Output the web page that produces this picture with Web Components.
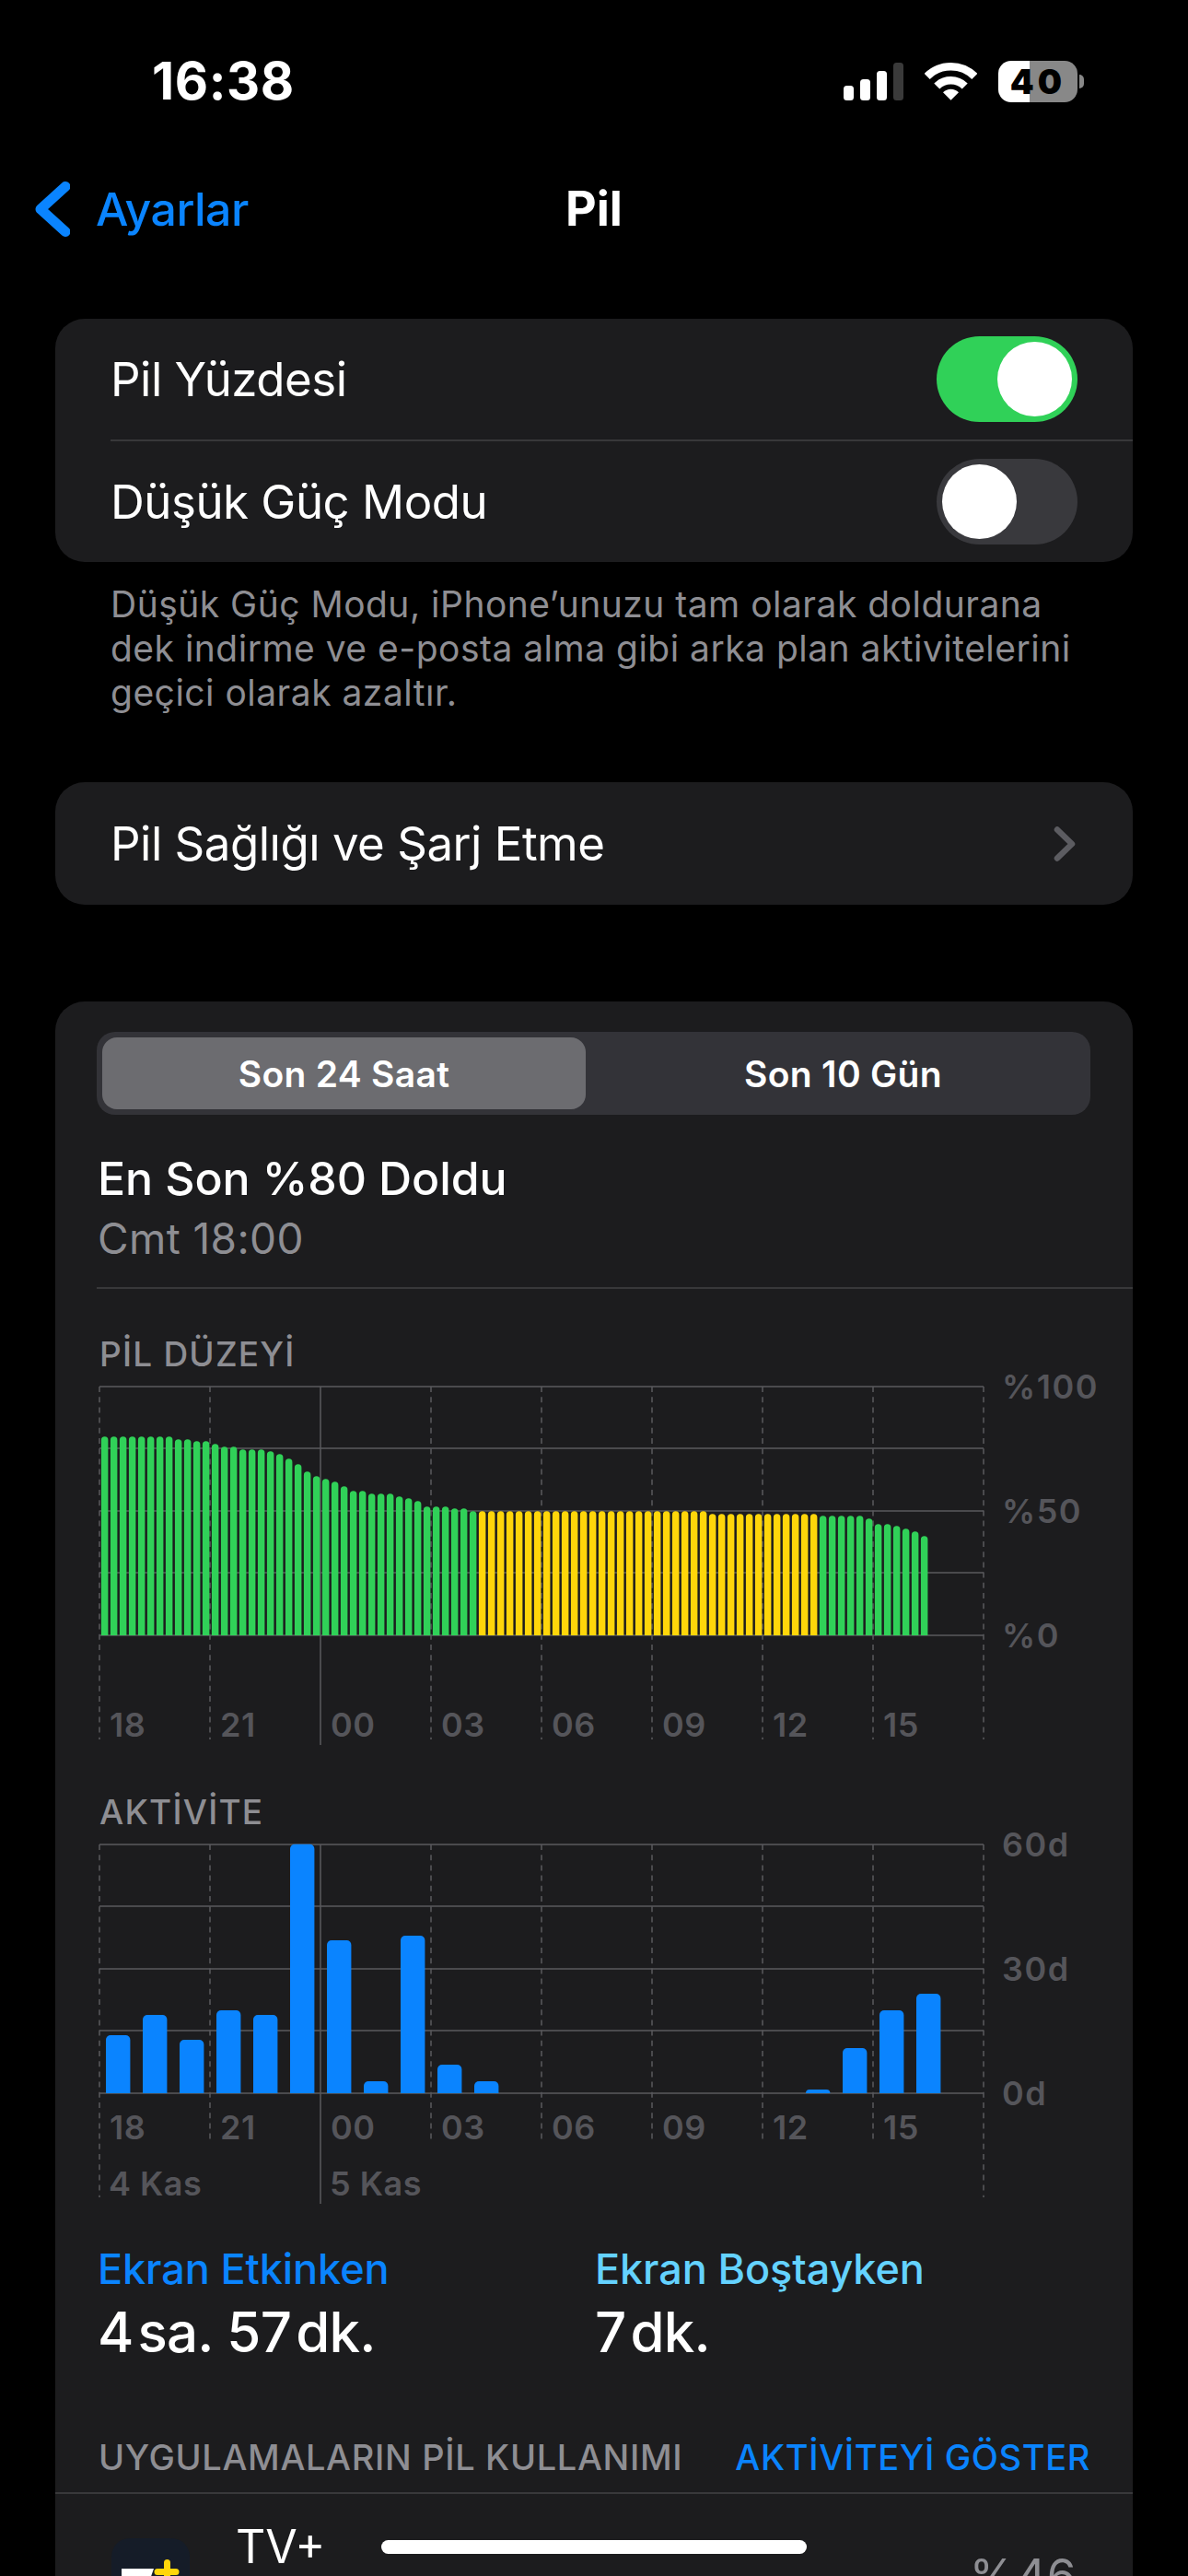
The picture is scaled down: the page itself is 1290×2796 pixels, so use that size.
<!DOCTYPE html>
<html lang="tr">
<head>
<meta charset="utf-8">
<title>Pil</title>
<style>
  html, body { margin: 0; height: 2796px; overflow: hidden; background: #000; }
  body { position: relative; color: #fff; font-family: Inter, "Liberation Sans", sans-serif; }
  settings-page { display: block; }
</style>
</head>
<body>
<settings-page>
  <status-bar slot="top" time="16:38" level="40"></status-bar>
  <nav-bar slot="top" back="Ayarlar" title="Pil"></nav-bar>

  <group-card style="margin-top:68px">
    <settings-row>Pil Yüzdesi<ios-switch slot="end" on></ios-switch></settings-row>
    <settings-row divided>Düşük Güç Modu<ios-switch slot="end"></ios-switch></settings-row>
  </group-card>
  <group-note>Düşük Güç Modu, iPhone’unuzu tam olarak doldurana<br>dek indirme ve e-posta alma gibi arka plan aktivitelerini<br>geçici olarak azaltır.</group-note>

  <group-card style="margin-top:73px">
    <settings-row link>Pil Sağlığı ve Şarj Etme</settings-row>
  </group-card>

  <group-card style="margin-top:105px">
    <segment-picker first="Son 24 Saat" second="Son 10 Gün"></segment-picker>
    <charge-summary title="En Son %80 Doldu" time="Cmt 18:00"></charge-summary>
    <usage-chart type="level" heading="PİL DÜZEYİ"></usage-chart>
    <usage-chart type="activity" heading="AKTİVİTE"></usage-chart>
    <screen-totals></screen-totals>
    <section-head action="AKTİVİTEYİ GÖSTER">UYGULAMALARIN PİL KULLANIMI</section-head>
    <app-row name="TV+" share="%46"></app-row>
  </group-card>
</settings-page>
<home-indicator></home-indicator>

<script>
/**
 * Battery settings screen, built from small web components.
 */

/**
 * Makes a template out of a html string.
 *
 * @param {string} html the markup.
 * @returns {HTMLTemplateElement} the template.
 */
function makeTemplate (html) {
  const template = document.createElement('template')
  template.innerHTML = html
  return template
}

/**
 * Base class, stamps the static template into an open shadow root.
 */
class ShadowElement extends HTMLElement {
  /**
   * Creates an instance of the current type.
   */
  constructor () {
    super()
    this.attachShadow({ mode: 'open' })
      .appendChild(this.constructor.template.content.cloneNode(true))
  }

  /**
   * Shortcut for querySelector in the shadow root.
   *
   * @param {string} selector css selector.
   * @returns {Element} the element found.
   */
  $ (selector) {
    return this.shadowRoot.querySelector(selector)
  }
}

customElements.define('settings-page', class extends ShadowElement {
  static template = makeTemplate(`
    <style>
      :host { display: block; }
      .top { display: block; }
      .body { padding: 0 60px; }
    </style>
    <div class="top"><slot name="top"></slot></div>
    <div class="body"><slot></slot></div>
  `)
})

customElements.define('status-bar', class extends ShadowElement {
  static template = makeTemplate(`
    <style>
      :host { display: flex; align-items: center; justify-content: space-between; height: 176px; padding: 0 113px 0 165px; }
      .time { font-size: 56px; font-weight: 700; letter-spacing: .6px; line-height: 60px; }
      .icons { display: flex; align-items: center; }
      .signal { display: block; margin-right: 23px; }
      .wifi { display: block; margin-right: 23px; }
      .battery { display: flex; align-items: center; gap: 2px; }
      .body {
        display: flex; align-items: center; justify-content: center;
        width: 86px; height: 45px; border-radius: 14px;
        background: linear-gradient(to right, #fff 34px, #888 34px);
        color: #000; font-size: 37px; font-weight: 900; letter-spacing: 4px; line-height: 45px;
      }
      .nub { width: 5px; height: 15px; border-radius: 0 8px 8px 0; background: #888; }
    </style>
    <div class="time"></div>
    <div class="icons">
      <svg class="signal" width="65" height="41" viewBox="0 0 65 41">
        <rect x="0" y="25" width="11" height="16" rx="3.5" fill="#fff"/>
        <rect x="18" y="18" width="11" height="23" rx="3.5" fill="#fff"/>
        <rect x="36" y="9" width="11" height="32" rx="3.5" fill="#fff"/>
        <rect x="54" y="0" width="11" height="41" rx="3.5" fill="#3a3a3a"/>
      </svg>
      <svg class="wifi" width="57" height="42" viewBox="0 0 57 42" fill="none" stroke="#fff" stroke-width="8.5">
        <path d="M2.7 15.9A36.5 36.5 0 0 1 54.3 15.9"/>
        <path d="M13.3 26.5A21.5 21.5 0 0 1 43.7 26.5"/>
        <path d="M28.5 41.7L20 33.2A12 12 0 0 1 37 33.2Z" fill="#fff" stroke="none"/>
      </svg>
      <div class="battery"><div class="body"></div><div class="nub"></div></div>
    </div>
  `)

  /**
   * Fills in the attributes.
   */
  connectedCallback () {
    this.$('.time').textContent = this.getAttribute('time')
    this.$('.body').textContent = this.getAttribute('level')
  }
})

customElements.define('nav-bar', class extends ShadowElement {
  static template = makeTemplate(`
    <style>
      :host { display: grid; grid-template-columns: 1fr auto 1fr; align-items: center; height: 102px; padding-left: 37px; padding-right: 37px; }
      .back { display: flex; align-items: center; gap: 28px; color: #0a84ff; font-size: 50px; font-weight: 500; letter-spacing: -.5px; line-height: 60px; }
      svg { display: block; }
      .title { font-size: 52px; font-weight: 700; letter-spacing: 0; line-height: 60px; }
    </style>
    <div class="back">
      <svg width="39" height="60" viewBox="0 0 39 60" fill="none" stroke="#0a84ff" stroke-width="11" stroke-linecap="round" stroke-linejoin="round"><path d="M34 5.500L7 30L34 54.500"/></svg>
      <span class="label"></span>
    </div>
    <div class="title"></div>
    <div></div>
  `)

  /**
   * Fills in the attributes.
   */
  connectedCallback () {
    this.$('.label').textContent = this.getAttribute('back')
    this.$('.title').textContent = this.getAttribute('title')
  }
})

customElements.define('group-card', class extends ShadowElement {
  static template = makeTemplate(`
    <style>
      :host { display: block; background: #1c1c1e; border-radius: 32px; overflow: hidden; }
    </style>
    <slot></slot>
  `)
})

customElements.define('settings-row', class extends ShadowElement {
  static template = makeTemplate(`
    <style>
      :host { display: block; padding-left: 60px; font-size: 51px; letter-spacing: -.5px; }
      .inner { display: flex; align-items: center; justify-content: space-between; height: 131px; padding-right: 60px; box-sizing: border-box; }
      :host([divided]) .inner { height: 133px; border-top: 2px solid #38383a; }
      :host([link]) .inner { height: 133px; }
      svg { display: none; }
      :host([link]) svg { display: block; margin-right: 2px; }
    </style>
    <div class="inner">
      <span><slot></slot></span>
      <slot name="end"></slot>
      <svg width="24" height="38" viewBox="0 0 24 38" fill="none" stroke="#5c5c61" stroke-width="6.500" stroke-linecap="round" stroke-linejoin="round"><path d="M4 3.500L20 19L4 34.500"/></svg>
    </div>
  `)
})

customElements.define('ios-switch', class extends ShadowElement {
  static template = makeTemplate(`
    <style>
      :host { display: flex; width: 153px; height: 93px; padding: 6px; box-sizing: border-box; border-radius: 47px; background: #39393d; }
      :host([on]) { background: #30d158; justify-content: flex-end; }
      .knob { width: 81px; height: 81px; border-radius: 50%; background: #fff; }
    </style>
    <div class="knob"></div>
  `)
})

customElements.define('group-note', class extends ShadowElement {
  static template = makeTemplate(`
    <style>
      :host { display: block; padding: 22px 60px 0; color: #8e8e93; font-size: 39px; line-height: 48px; letter-spacing: .48px; height: 144px; }
    </style>
    <slot></slot>
  `)
})

customElements.define('segment-picker', class extends ShadowElement {
  static template = makeTemplate(`
    <style>
      :host { display: grid; grid-template-columns: 1fr 1fr; gap: 17px; height: 90px; margin: 33px 46px 0 45px; padding: 6px; box-sizing: border-box; border-radius: 20px; background: #333338; font-size: 39px; font-weight: 600; letter-spacing: .3px; }
      div { display: flex; align-items: center; justify-content: center; border-radius: 16px; }
      .active { background: #6c6c70; }
    </style>
    <div class="active" id="a"></div>
    <div id="b"></div>
  `)

  /**
   * Fills in the attributes.
   */
  connectedCallback () {
    this.$('#a').textContent = this.getAttribute('first')
    this.$('#b').textContent = this.getAttribute('second')
  }
})

customElements.define('charge-summary', class extends ShadowElement {
  static template = makeTemplate(`
    <style>
      :host { display: block; margin: 39px 0 0 45px; }
      .title { padding-left: 1px; font-size: 50px; font-weight: 500; line-height: 60px; letter-spacing: -.1px; }
      .time { padding-left: 1px; margin-top: 7px; color: #8e8e93; font-size: 46px; line-height: 56px; letter-spacing: .4px; }
      .line { height: 2px; margin-top: 25px; background: #38383a; }
    </style>
    <div class="title"></div>
    <div class="time"></div>
    <div class="line"></div>
  `)

  /**
   * Fills in the attributes.
   */
  connectedCallback () {
    this.$('.title').textContent = this.getAttribute('title')
    this.$('.time').textContent = this.getAttribute('time')
  }
})

const GREEN = '#30d158'
const YELLOW = '#ffd60a'
const HOURS = ['18', '21', '00', '03', '06', '09', '12', '15']

// Top of every level bar, in page pixels relative to the %100 line at 1440.
const LEVEL_TOPS = [
  358, 358, 358, 358, 358, 358, 358, 358, 367, 367, 373, 373, 382, 391, 391,
  400, 400, 400, 406, 415, 430, 448, 472, 487, 496, 505, 520, 535, 535, 544,
  544, 544, 553, 559, 568, 586, 586, 586, 592, 592, 601,
  601, 601, 601, 601, 601, 601, 601, 601, 601, 601, 601, 601, 601, 601, 601,
  601, 601, 601, 601, 601, 601, 601, 601, 601, 601,
  610, 610, 610, 610, 610, 610, 610, 610, 610, 610, 610, 610,
  616, 616, 616, 616, 616, 625, 643, 643, 649, 658, 667, 682
].map(v => 1440 + v / 3)

// Activity bars as [slot, top] pairs, slots are 40px wide.
const ACTIVITY_TOPS = [
  [0, 807], [1, 741], [2, 822], [3, 726], [4, 741], [5, 185], [6, 498],
  [7, 957], [8, 483], [9, 903], [10, 957], [19, 984], [20, 849], [21, 726], [22, 672]
].map(([slot, v]) => [slot, 1940 + v / 3])

/**
 * Draws the shared grid of a chart.
 *
 * @param {number[]} ys horizontal line positions.
 * @param {number} height svg height.
 * @param {number} shortEnd where the dashed hour lines stop.
 * @param {number} solidEnd where the midnight line stops.
 * @returns {string} svg markup.
 */
function gridLines (ys, height, shortEnd, solidEnd) {
  let out = ''
  for (const y of ys) {
    out += `<line x1="1" x2="961" y1="${y}" y2="${y}"/>`
  }
  for (let i = 0; i <= 8; i++) {
    const x = 1 + i * 120
    if (i === 2) {
      out += `<line x1="${x}" x2="${x}" y1="1" y2="${solidEnd}"/>`
    } else {
      const end = (i === 0 || i === 8) ? height : shortEnd
      out += `<line x1="${x}" x2="${x}" y1="1" y2="${end}" stroke-dasharray="6 5.200"/>`
    }
  }
  return out
}

customElements.define('usage-chart', class extends ShadowElement {
  static template = makeTemplate(`
    <style>
      :host { display: block; margin: 49px 0 0 47px; }
      :host([type="activity"]) { margin-top: 51px; }
      h3 { margin: 0 0 12px 1px; color: #8e8e93; font-size: 37px; font-weight: 500; line-height: 44px; letter-spacing: 1.2px; }
      .plot { display: grid; grid-template-columns: 963px auto; column-gap: 18px; }
      .canvas { display: grid; grid-column: 1; grid-row: 1; }
      .canvas > * { grid-column: 1; grid-row: 1; }
      svg { display: block; }
      .labels { color: #55555a; font-size: 36px; font-weight: 600; line-height: 40px; letter-spacing: .5px; }
      .scale.labels { letter-spacing: 1.5px; }
      .hours { display: grid; grid-template-columns: repeat(8, 120px); align-self: start; }
      .hours span { padding-left: 12px; }
      .days { display: grid; grid-template-columns: 240px 240px; align-self: start; margin-top: 349px; }
      .days span { padding-left: 11px; }
      .scale { display: flex; flex-direction: column; justify-content: space-between; height: 310px; margin-top: -19px; }
    </style>
    <h3></h3>
    <div class="plot">
      <div class="canvas">
        <svg width="963" fill="none" stroke="#5a5a5e" stroke-width="1.500"></svg>
        <div class="hours labels"></div>
        <div class="days labels"></div>
      </div>
      <div class="scale labels"></div>
    </div>
  `)

  /**
   * Draws the chart for the type attribute.
   */
  connectedCallback () {
    this.$('h3').textContent = this.getAttribute('heading')
    const level = this.getAttribute('type') === 'level'
    const svg = this.$('svg')
    const height = level ? 390 : 391
    svg.setAttribute('height', height)
    svg.setAttribute('viewBox', `0 0 963 ${height}`)

    const top = level ? 1504 : 2001
    const ys = [1, 68, 136, 203, 271]
    let marks = gridLines(ys, 384, level ? 384 : 324, level ? 390 : 391)

    if (level) {
      LEVEL_TOPS.forEach((abs, i) => {
        const colour = (i >= 41 && i <= 77) ? YELLOW : GREEN
        const x = 2.9 + i * 10
        const y = abs - top
        marks += `<path stroke="none" fill="${colour}" d="M${x} 271V${y + 3.75}a3.750 3.750 0 0 1 7.500 0V271Z"/>`
      })
    } else {
      ACTIVITY_TOPS.forEach(([slot, abs]) => {
        const x = 8 + slot * 40
        const y = abs - top
        const r = Math.min(5, 271 - y)
        marks += `<path stroke="none" fill="#0a84ff" d="M${x} 271V${y + r}a${r} ${r} 0 0 1 ${r} ${-r}h${26.4 - 2 * r}a${r} ${r} 0 0 1 ${r} ${r}V271Z"/>`
      })
    }
    svg.innerHTML = marks

    const hours = this.$('.hours')
    hours.style.marginTop = (level ? 348 : 288) + 'px'
    for (const hour of HOURS) {
      const span = document.createElement('span')
      span.textContent = hour
      hours.appendChild(span)
    }

    if (!level) {
      for (const day of ['4 Kas', '5 Kas']) {
        const span = document.createElement('span')
        span.textContent = day
        this.$('.days').appendChild(span)
      }
    }

    for (const label of level ? ['%100', '%50', '%0'] : ['60d', '30d', '0d']) {
      const span = document.createElement('span')
      span.textContent = label
      this.$('.scale').appendChild(span)
    }
  }
})

customElements.define('screen-totals', class extends ShadowElement {
  static template = makeTemplate(`
    <style>
      :host { display: grid; grid-template-columns: 540px auto; margin: 43px 0 0 46px; }
      .name { font-size: 45px; font-weight: 500; line-height: 56px; letter-spacing: -.1px; color: #0a84ff; }
      .idle { color: #64d2ff; }
      .value { margin-top: 4px; font-size: 60px; font-weight: 500; line-height: 72px; letter-spacing: -.8px; }
      i { font-style: normal; margin-left: 5px; }
    </style>
    <div>
      <div class="name">Ekran Etkinken</div>
      <div class="value">4<i>sa.</i> 57<i>dk.</i></div>
    </div>
    <div>
      <div class="name idle">Ekran Boştayken</div>
      <div class="value">7<i>dk.</i></div>
    </div>
  `)
})

customElements.define('section-head', class extends ShadowElement {
  static template = makeTemplate(`
    <style>
      :host { display: block; margin-top: 76px; }
      .row { display: flex; justify-content: space-between; padding: 0 46px 0 47px; font-size: 38px; font-weight: 500; line-height: 48px; letter-spacing: .65px; color: #8e8e93; }
      .action { color: #0a84ff; }
      .line { height: 2px; margin-top: 14px; background: #38383a; }
    </style>
    <div class="row"><span><slot></slot></span><span class="action"></span></div>
    <div class="line"></div>
  `)

  /**
   * Fills in the attributes.
   */
  connectedCallback () {
    this.$('.action').textContent = this.getAttribute('action')
  }
})

customElements.define('app-row', class extends ShadowElement {
  static template = makeTemplate(`
    <style>
      :host { display: grid; grid-template-columns: 85px 1fr auto; column-gap: 50px; height: 200px; padding: 0 61px 0 61px; }
      .icon { display: block; margin-top: 48px; width: 85px; height: 85px; }
      .name { margin-top: 27px; font-size: 50px; line-height: 60px; }
      .share { margin-top: 59px; color: #8e8e93; font-size: 51px; line-height: 60px; letter-spacing: .5px; }
    </style>
    <svg class="icon" viewBox="0 0 85 85">
      <rect width="85" height="85" rx="20" fill="#151c28"/>
      <path d="M11 33H46L40 50H28L32 41H11Z" fill="#fff"/>
      <path d="M57 26.500a3.500 3.500 0 0 1 7 0V33H70a3.500 3.500 0 0 1 0 7H64V50a3.500 3.500 0 0 1-7 0V40H50a3.500 3.500 0 0 1 0-7H57Z" fill="#ffd60a"/>
    </svg>
    <div class="name"></div>
    <div class="share"></div>
  `)

  /**
   * Fills in the attributes.
   */
  connectedCallback () {
    this.$('.name').textContent = this.getAttribute('name')
    this.$('.share').textContent = this.getAttribute('share')
  }
})

customElements.define('home-indicator', class extends ShadowElement {
  static template = makeTemplate(`
    <style>
      :host { position: absolute; left: 414px; top: 2757px; width: 462px; height: 15px; border-radius: 8px; background: #fff; }
    </style>
  `)
})
</script>
</body>
</html>
